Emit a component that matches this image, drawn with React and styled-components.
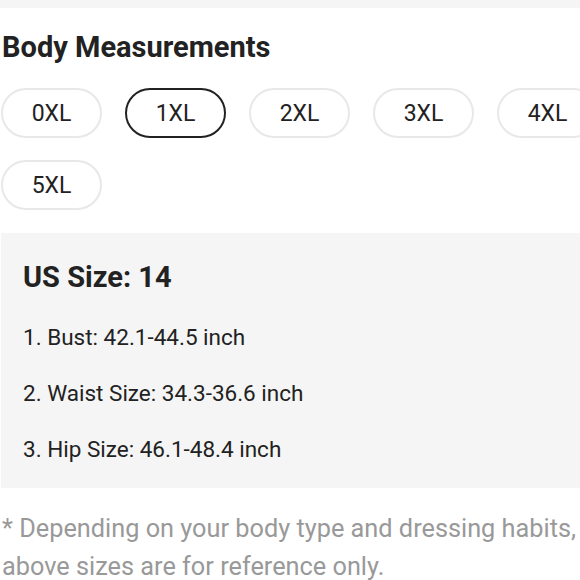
import React from "react";
import styled, { createGlobalStyle } from "styled-components";

const Global = createGlobalStyle`
  html, body { margin: 0; padding: 0; background: #fff; overflow: hidden; }
  body { font-family: Roboto, "Noto Sans", Arial, sans-serif; color: #222; }
`;

const Page = styled.div`
  width: 624px;
`;

const TopBar = styled.div`
  height: 8px;
  background: #f5f5f5;
`;

const Heading = styled.h2`
  margin: 0;
  padding: 22px 0 0 2px;
  font-size: 29px;
  line-height: 34px;
  font-weight: 700;
  color: #222;
`;

const Pills = styled.div`
  display: grid;
  grid-template-columns: repeat(5, 101px);
  column-gap: 23px;
  row-gap: 22px;
  padding: 24px 0 0 1px;
`;

const Pill = styled.button`
  height: 50px;
  border-radius: 25px;
  border: ${(p) => (p.$active ? "2px solid #222" : "2px solid #e8e8e8")};
  background: #fff;
  font-family: Roboto, Arial, sans-serif;
  font-size: 23px;
  color: #222;
  padding: 0;
`;

const InfoBox = styled.div`
  margin-top: 23px;
  margin-left: 1px;
  background: #f5f5f5;
  padding: 28px 22px 11px;
`;

const SizeTitle = styled.div`
  font-size: 29px;
  font-weight: 700;
  line-height: 32px;
  color: #222;
  margin-bottom: 16px;
`;

const Item = styled.div`
  font-size: 22.5px;
  line-height: 56px;
  color: #222;
`;

const Note = styled.p`
  margin: 22px 0 0 2px;
  font-size: 25.3px;
  line-height: 38px;
  color: #999;
`;

const sizes = ["0XL", "1XL", "2XL", "3XL", "4XL", "5XL"];
const items = [
  "1. Bust: 42.1-44.5 inch",
  "2. Waist Size: 34.3-36.6 inch",
  "3. Hip Size: 46.1-48.4 inch",
];

export default function App() {
  return (
    <Page>
      <Global />
      <TopBar />
      <Heading>Body Measurements</Heading>
      <Pills>
        {sizes.map((s) => (
          <Pill key={s} $active={s === "1XL"}>
            {s}
          </Pill>
        ))}
      </Pills>
      <InfoBox>
        <SizeTitle>US Size: 14</SizeTitle>
        {items.map((t) => (
          <Item key={t}>{t}</Item>
        ))}
      </InfoBox>
      <Note>
        * Depending on your body type and dressing habits, the above sizes are
        for reference only.
      </Note>
    </Page>
  );
}
